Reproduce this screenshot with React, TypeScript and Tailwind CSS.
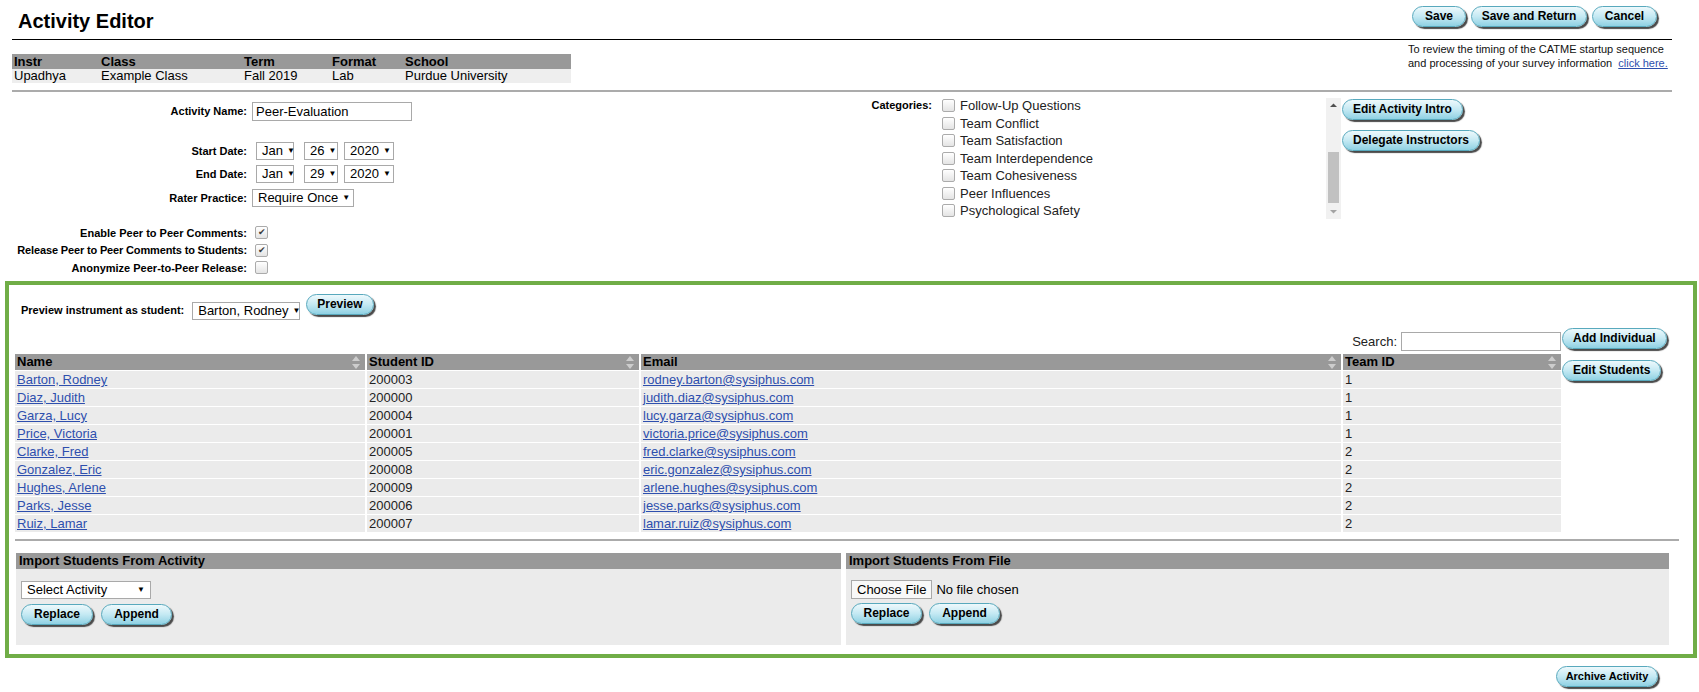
import React from 'react';

const Btn = ({ children, className = 'px-[10px] text-[12px]' }: { children: React.ReactNode; className?: string }) => (
  <button
    className={`h-[21px] shrink-0 rounded-full border border-[#58a9bd] bg-linear-to-b from-[#eef9fc] via-[#c4e9f3] to-[#8fd1e3] font-bold leading-[19px] text-black shadow-[2px_2px_1px_#4a4a4a] ${className}`}
  >
    {children}
  </button>
);

const Select = ({ value, className = '' }: { value: string; className?: string }) => (
  <div
    className={`flex h-[18px] shrink-0 items-center justify-between gap-[4px] whitespace-nowrap border border-[#a9a9a9] bg-white px-[5px] text-[13px] leading-[16px] ${className}`}
  >
    <span>{value}</span>
    <span className="text-[8px] leading-none">▼</span>
  </div>
);

const Check = ({ checked = false }: { checked?: boolean }) => (
  <span className="flex h-[13px] w-[13px] shrink-0 items-center justify-center rounded-[2px] border border-[#ababab] bg-linear-to-b from-white to-[#e4e4e4] text-[9px] leading-none text-[#3c3c3c]">
    {checked ? '✔' : ''}
  </span>
);

const SortIcon = () => (
  <svg width="8" height="13" viewBox="0 0 8 13" className="shrink-0">
    <polygon points="0,5 4,0 8,5" fill="#cdcdcd" />
    <polygon points="0,8 4,13 8,8" fill="#cdcdcd" />
  </svg>
);

const students = [
  { name: 'Barton, Rodney', id: '200003', email: 'rodney.barton@sysiphus.com', team: '1' },
  { name: 'Diaz, Judith', id: '200000', email: 'judith.diaz@sysiphus.com', team: '1' },
  { name: 'Garza, Lucy', id: '200004', email: 'lucy.garza@sysiphus.com', team: '1' },
  { name: 'Price, Victoria', id: '200001', email: 'victoria.price@sysiphus.com', team: '1' },
  { name: 'Clarke, Fred', id: '200005', email: 'fred.clarke@sysiphus.com', team: '2' },
  { name: 'Gonzalez, Eric', id: '200008', email: 'eric.gonzalez@sysiphus.com', team: '2' },
  { name: 'Hughes, Arlene', id: '200009', email: 'arlene.hughes@sysiphus.com', team: '2' },
  { name: 'Parks, Jesse', id: '200006', email: 'jesse.parks@sysiphus.com', team: '2' },
  { name: 'Ruiz, Lamar', id: '200007', email: 'lamar.ruiz@sysiphus.com', team: '2' },
];

const categories = [
  'Follow-Up Questions',
  'Team Conflict',
  'Team Satisfaction',
  'Team Interdependence',
  'Team Cohesiveness',
  'Peer Influences',
  'Psychological Safety',
];

const cols = 'grid grid-cols-[350px_272px_700px_218px] gap-x-[2px]';
const link = 'text-[#2e4fae] underline';

export default function App() {
  return (
    <div className="min-h-screen w-full bg-white font-['Liberation_Sans',Arial,sans-serif] text-black">
      <div className="ml-[12px] w-[1660px]">
        {/* title bar */}
        <div className="flex h-[40px] items-start justify-between border-b border-black">
          <h1 className="pl-[6px] pt-[9px] text-[20px] font-bold leading-[24px]">Activity Editor</h1>
          <div className="flex gap-[5px] pt-[6px] pr-[15px]">
            <Btn className="w-[54px] text-[12px]">Save</Btn>
            <Btn className="w-[116px] text-[12px]">Save and Return</Btn>
            <Btn className="w-[65px] text-[12px]">Cancel</Btn>
          </div>
        </div>

        {/* class info */}
        <div className="flex h-[52px] items-start justify-between border-b-2 border-[#ababab]">
          <div className="mt-[14px] w-[559px] text-[13px]">
            <div className="grid h-[15px] grid-cols-[87px_143px_88px_73px_168px] bg-[#999999] pl-[2px] font-bold leading-[15px]">
              <span>Instr</span>
              <span>Class</span>
              <span>Term</span>
              <span>Format</span>
              <span>School</span>
            </div>
            <div className="grid h-[14px] grid-cols-[87px_143px_88px_73px_168px] bg-[#eeeeee] pl-[2px] leading-[14px]">
              <span>Upadhya</span>
              <span>Example Class</span>
              <span>Fall 2019</span>
              <span>Lab</span>
              <span>Purdue University</span>
            </div>
          </div>
          <div className="w-[264px] pt-[2px] text-[11px] leading-[14px] text-[#111]">
            <div className="whitespace-nowrap">To review the timing of the CATME startup sequence</div>
            <div className="whitespace-nowrap">
              and processing of your survey information <a className={`ml-[3px] ${link}`}>click here.</a>
            </div>
          </div>
        </div>

        {/* form */}
        <div className="flex h-[189px] items-start">
          <div className="w-[858px] text-[11px]">
            <div className="mt-[10px] flex h-[19px] items-center">
              <label className="w-[235px] text-right font-bold">Activity Name:</label>
              <div className="ml-[5px] flex h-[19px] w-[160px] items-center border border-[#a9a9a9] bg-white pl-[3px] text-[13px]">
                Peer-Evaluation
              </div>
            </div>
            <div className="mt-[21px] flex h-[18px] items-center">
              <label className="w-[235px] text-right font-bold">Start Date:</label>
              <Select value="Jan" className="ml-[9px] w-[38px]" />
              <Select value="26" className="ml-[10px] w-[34px]" />
              <Select value="2020" className="ml-[6px] w-[50px]" />
            </div>
            <div className="mt-[5px] flex h-[18px] items-center">
              <label className="w-[235px] text-right font-bold">End Date:</label>
              <Select value="Jan" className="ml-[9px] w-[38px]" />
              <Select value="29" className="ml-[10px] w-[34px]" />
              <Select value="2020" className="ml-[6px] w-[50px]" />
            </div>
            <div className="mt-[6px] flex h-[18px] items-center">
              <label className="w-[235px] text-right font-bold">Rater Practice:</label>
              <Select value="Require Once" className="ml-[5px] w-[102px]" />
            </div>
            <div className="mt-[17px] flex h-[17.5px] items-center">
              <label className="w-[235px] text-right font-bold">Enable Peer to Peer Comments:</label>
              <span className="ml-[8px]">
                <Check checked />
              </span>
            </div>
            <div className="flex h-[17.5px] items-center">
              <label className="w-[235px] whitespace-nowrap text-right font-bold tracking-[-0.15px]">
                Release Peer to Peer Comments to Students:
              </label>
              <span className="ml-[8px]">
                <Check checked />
              </span>
            </div>
            <div className="flex h-[17.5px] items-center">
              <label className="w-[235px] text-right font-bold">Anonymize Peer-to-Peer Release:</label>
              <span className="ml-[8px]">
                <Check />
              </span>
            </div>
          </div>

          <div className="mt-[5px] flex items-start">
            <label className="w-[62px] text-right text-[11px] font-bold leading-[17.5px]">Categories:</label>
            <div className="ml-[4px] h-[122px] w-[390px] overflow-hidden pl-[6px]">
              {categories.map((c) => (
                <div key={c} className="flex h-[17.5px] items-center gap-[5px] text-[13px] text-[#222]">
                  <Check />
                  <span>{c}</span>
                </div>
              ))}
            </div>
            <div className="mt-[1px] flex h-[121px] w-[15px] flex-col items-center bg-[#f1f1f1]">
              <svg width="15" height="15" viewBox="0 0 15 15">
                <polygon points="4,9 7.5,5.5 11,9" fill="#505050" />
              </svg>
              <div className="mt-[39px] h-[51px] w-[11px] bg-[#c1c1c1]" />
              <div className="flex-1" />
              <svg width="15" height="15" viewBox="0 0 15 15">
                <polygon points="4,6 7.5,9.5 11,6" fill="#a3a3a3" />
              </svg>
            </div>
            <div className="ml-[1px] flex flex-col items-start gap-[10px] pt-[2px]">
              <Btn>Edit Activity Intro</Btn>
              <Btn>Delegate Instructors</Btn>
            </div>
          </div>
        </div>
      </div>

      {/* students panel */}
      <div className="ml-[5px] h-[377px] w-[1692px] border-4 border-[#70ad47]">
        <div className="flex h-[43px] items-start pl-[12px] pt-[9px]">
          <label className="mt-[10px] text-[11px] font-bold leading-[13px]">Preview instrument as student:</label>
          <Select value="Barton, Rodney" className="ml-[8px] mt-[8px] w-[108px]" />
          <Btn className="ml-[6px] px-[10px] text-[12px]">Preview</Btn>
        </div>

        <div className="flex items-start pl-[6px]">
          <div className="w-[1546px]">
            <div className="flex h-[26px] items-start justify-end pt-[4px]">
              <span className="text-[13px] leading-[19px] text-[#222]">Search:</span>
              <div className="ml-[4px] h-[19px] w-[160px] border border-[#a9a9a9] bg-white" />
            </div>
            <div className={`${cols} h-[16px] bg-white text-[13px] font-bold leading-[16px]`}>
              {['Name', 'Student ID', 'Email', 'Team ID'].map((h) => (
                <div key={h} className="flex items-center justify-between bg-[#999999] pl-[2px] pr-[5px]">
                  <span>{h}</span>
                  <SortIcon />
                </div>
              ))}
            </div>
            {students.map((s) => (
              <div key={s.id} className={`${cols} mt-[1px] h-[17px] bg-white text-[13px] leading-[17px] text-[#222]`}>
                <div className="bg-[#ebebeb] pl-[2px]">
                  <a className={link}>{s.name}</a>
                </div>
                <div className="bg-[#ebebeb] pl-[2px]">{s.id}</div>
                <div className="bg-[#ebebeb] pl-[2px]">
                  <a className={link}>{s.email}</a>
                </div>
                <div className="bg-[#ebebeb] pl-[2px]">{s.team}</div>
              </div>
            ))}
          </div>
          <div className="ml-[1px] flex flex-col items-start gap-[11px]">
            <Btn>Add Individual</Btn>
            <Btn>Edit Students</Btn>
          </div>
        </div>

        <div className="ml-[6px] mr-[14px] mt-[7px] border-t-2 border-[#ababab]" />

        <div className="ml-[7px] mt-[12px] flex gap-[5px]">
          <div className="h-[92px] w-[825px] bg-[#ebebeb]">
            <div className="h-[16px] bg-[#999999] pl-[3px] text-[13px] font-bold leading-[16px]">
              Import Students From Activity
            </div>
            <div className="pl-[5px] pt-[12px]">
              <Select value="Select Activity" className="w-[130px] text-[12px]" />
              <div className="mt-[5px] flex gap-[8px]">
                <Btn className="w-[72px] text-[12px]">Replace</Btn>
                <Btn className="w-[71px] text-[12px]">Append</Btn>
              </div>
            </div>
          </div>
          <div className="h-[92px] w-[823px] bg-[#ebebeb]">
            <div className="h-[16px] bg-[#999999] pl-[3px] text-[13px] font-bold leading-[16px]">
              Import Students From File
            </div>
            <div className="pl-[5px] pt-[11px]">
              <div className="flex h-[19px] items-center text-[13px]">
                <span className="flex h-[19px] items-center border border-[#a9a9a9] bg-[#f8f8f8] px-[5px]">
                  Choose File
                </span>
                <span className="ml-[4px]">No file chosen</span>
              </div>
              <div className="mt-[4px] flex gap-[7px]">
                <Btn className="w-[71px] text-[12px]">Replace</Btn>
                <Btn className="w-[71px] text-[12px]">Append</Btn>
              </div>
            </div>
          </div>
        </div>
      </div>

      <div className="ml-[12px] flex w-[1660px] justify-end pr-[14px] pt-[8px]">
        <Btn className="w-[102px] text-[11px]">Archive Activity</Btn>
      </div>
    </div>
  );
}
